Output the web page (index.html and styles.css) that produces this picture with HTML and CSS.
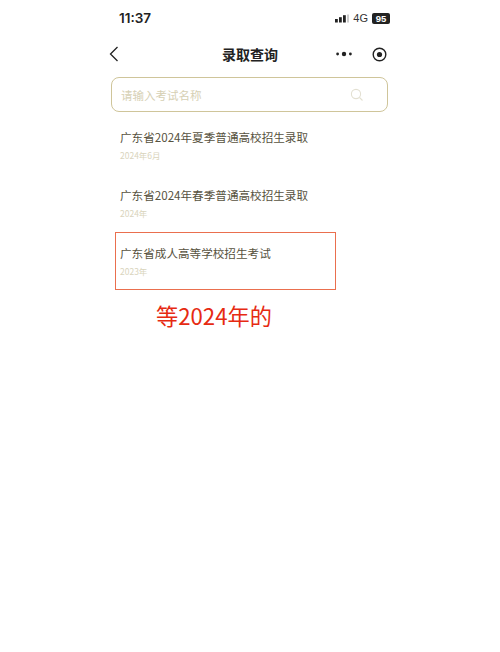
FILE: index.html
```html
<!DOCTYPE html>
<html lang="zh-CN">
<head>
<meta charset="utf-8">
<title>录取查询</title>
<link rel="stylesheet" href="styles.css">
</head>
<body>
<div class="phone">
  <div class="status">
    <span class="time">11:37</span>
    <span class="status-right">
      <svg class="signal" width="14" height="10" viewBox="0 0 14 10"><rect x="0" y="6" width="2.8" height="3.5"/><rect x="4" y="4.2" width="2.8" height="5.3"/><rect x="8" y="2.2" width="2.8" height="7.3"/><rect x="12" y="1.5" width="2" height="8" fill="#ccc"/></svg>
      <span class="net">4G</span>
      <span class="batt">95</span>
    </span>
  </div>
  <div class="nav">
    <svg class="back" width="12" height="18" viewBox="0 0 12 18"><path d="M9.5 2 L2.5 9 L9.5 16" fill="none" stroke="#222" stroke-width="1.3"/></svg>
    <span class="title">录取查询</span>
    <span class="capsule">
      <svg width="16" height="6" viewBox="0 0 16 6"><circle cx="1.6" cy="3" r="1.4" fill="#222"/><circle cx="8" cy="3" r="2.2" fill="#222"/><circle cx="14.4" cy="3" r="1.4" fill="#222"/></svg>
      <svg width="15" height="15" viewBox="0 0 15 15"><circle cx="7.5" cy="7.5" r="6.3" fill="none" stroke="#222" stroke-width="1.4"/><circle cx="7.5" cy="7.5" r="2.6" fill="#222"/></svg>
    </span>
  </div>
  <div class="search">
    <span class="placeholder">请输入考试名称</span>
    <svg width="14" height="14" viewBox="0 0 14 14"><circle cx="6" cy="6" r="4.6" fill="none" stroke="#e3e0d2" stroke-width="1.1"/><path d="M9.5 9.5 L12.5 12.5" stroke="#e3e0d2" stroke-width="1.1"/></svg>
  </div>
  <div class="list">
    <div class="item">
      <div class="name">广东省2024年夏季普通高校招生录取</div>
      <div class="date">2024年6月</div>
    </div>
    <div class="item">
      <div class="name">广东省2024年春季普通高校招生录取</div>
      <div class="date">2024年</div>
    </div>
    <div class="item marked">
      <div class="name">广东省成人高等学校招生考试</div>
      <div class="date">2023年</div>
    </div>
  </div>
  <div class="note">等2024年的</div>
</div>
</body>
</html>
```
FILE: styles.css
```css
* { box-sizing: border-box; }
html, body { margin: 0; padding: 0; background: #fff; }
body { width: 500px; height: 652px; overflow: hidden; font-family: "Noto Sans CJK SC", "Liberation Sans", sans-serif; }
.phone { width: 300px; margin-left: 100px; padding: 0 12px 0 11px; }
.status { height: 34px; padding: 8px 0 0 8px; display: flex; justify-content: space-between; align-items: flex-start; }
.time { font: 600 13.5px/20px "Inter", "Liberation Sans", sans-serif; color: #222; }
.status-right { display: flex; align-items: center; gap: 4px; height: 20px; margin-right: -2px; }
.signal { fill: #222; }
.net { font: 400 11px/12px "Liberation Sans", sans-serif; color: #333; }
.batt { font: 700 9.5px/11px "Liberation Sans", sans-serif; color: #fff; background: #222; border-radius: 2px; width: 18px; text-align: center; }
.nav { height: 40px; display: flex; align-items: center; position: relative; justify-content: space-between; padding: 0 1px 0 0; }
.back { margin-left: -3px; }
.title { font-size: 14px; font-weight: 700; color: #222; position: absolute; left: 0; right: 0; text-align: center; padding-left: 1px; }
.capsule { display: flex; align-items: center; gap: 20px; }
.search { height: 35px; margin-top: 3px; border: 1px solid #cfc59a; border-radius: 8px; display: flex; align-items: center; justify-content: space-between; padding: 0 23px 0 9px; }
.placeholder { font-size: 11.5px; color: #d6d0b4; }
.list { padding: 4px 0 0 4px; }
.item { height: 58px; padding: 11px 0 0 5px; width: 221px; }
.name { font-size: 11.6px; line-height: 20px; color: #575240; white-space: nowrap; }
.date { font-size: 8.5px; line-height: 12px; margin-top: 2px; color: #d9d4bc; }
.item.marked { border: 1px solid #ea6f4e; padding: 10px 0 0 4px; }
.note { margin: 10px 0 0 45px; font-size: 22.2px; line-height: 30px; color: #e62a12; }
```
